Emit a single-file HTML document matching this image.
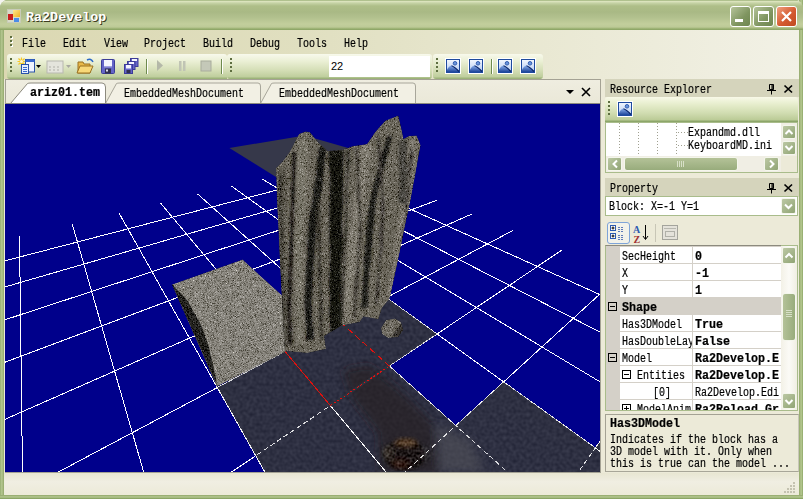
<!DOCTYPE html>
<html><head><meta charset="utf-8">
<style>
*{margin:0;padding:0;box-sizing:border-box}
html,body{width:803px;height:499px;overflow:hidden;background:#F4F4F0}
body{position:relative;font-family:"Liberation Mono",monospace;font-size:12px;color:#000}
.a{position:absolute}
.t{position:absolute;white-space:nowrap;font:12px/12px "Liberation Mono",monospace;transform:scaleX(0.8333);transform-origin:0 0;-webkit-text-stroke:0.2px #000}
.b{font-weight:bold}
.t.b{transform:scaleX(0.9722)}
</style></head><body>
<!-- window frame -->
<div class="a" style="left:0;top:0;width:803px;height:499px;background:linear-gradient(90deg,#8AA266 0,#B4C78F 1px,#A6BA80 3px,#8EA467 4px);border-radius:8px 8px 0 0"></div>
<div class="a" style="right:0;top:0;width:4px;height:499px;background:linear-gradient(90deg,#8EA467 0,#A6BA80 1px,#B4C78F 3px,#7E9A58 4px)"></div>
<div class="a" style="left:0;bottom:0;width:803px;height:4px;background:linear-gradient(180deg,#8EA467 0,#A6BA80 1px,#B4C78F 2px,#7E9A58 4px)"></div>
<!-- title bar -->
<div class="a" style="left:0;top:0;width:803px;height:30px;border-radius:8px 8px 0 0;background:linear-gradient(180deg,#7E9A58 0,#E2E8C4 1px,#C6D3A6 3px,#AEBE88 6px,#A9B985 12px,#B3C28F 18px,#C2CE9C 24px,#BDCA97 27px,#94AC6C 29px,#8AA264 30px)"></div>
<!-- app icon -->
<div class="a" style="left:7px;top:9px;width:14px;height:14px;border:1px solid #C8CCB8;background:#D8DBC8"></div>
<div class="a" style="left:8px;top:14px;width:5px;height:6px;background:#C81E1E"></div>
<div class="a" style="left:13px;top:10px;width:7px;height:7px;background:linear-gradient(135deg,#FFE890,#F0B020)"></div>
<div class="a" style="left:14px;top:18px;width:5px;height:4px;background:#4A8CE8"></div>
<div class="a b" style="left:26px;top:11px;color:#fff;font:bold 13.4px/14px 'Liberation Mono',monospace;white-space:nowrap;text-shadow:1px 1px 0 #3C3C1E">Ra2Develop</div>
<!-- caption buttons -->
<div class="a" style="left:730px;top:6px;width:21px;height:21px;border:1px solid #fff;border-radius:3px;background:linear-gradient(135deg,#B6C49A,#7F9560 60%,#6F8650)"></div>
<div class="a" style="left:735px;top:19px;width:8px;height:3px;background:#fff"></div>
<div class="a" style="left:753px;top:6px;width:21px;height:21px;border:1px solid #fff;border-radius:3px;background:linear-gradient(135deg,#B6C49A,#7F9560 60%,#6F8650)"></div>
<div class="a" style="left:758px;top:11px;width:11px;height:11px;border:1px solid #fff;border-top-width:3px"></div>
<div class="a" style="left:776px;top:6px;width:21px;height:21px;border:1px solid #fff;border-radius:3px;background:linear-gradient(135deg,#F0A080,#D45A30 55%,#C04A20)"></div>
<svg class="a" style="left:776px;top:6px" width="21" height="21"><path d="M6 6L15 15M15 6L6 15" stroke="#fff" stroke-width="2.2"/></svg>

<!-- client area -->
<div class="a" style="left:4px;top:30px;width:795px;height:465px;background:#ECEAD8"></div>
<!-- menu + toolbar container gradient -->
<div class="a" style="left:4px;top:30px;width:795px;height:49px;background:linear-gradient(90deg,#DBD8B2 0,#E0DFC0 300px,#E6E5CC 450px,#F2F1E6 100%)"></div>
<!-- menu grip -->
<svg class="a" style="left:10px;top:36px" width="4" height="12"><g fill="#fff"><rect x="1" y="1" width="2" height="2"/><rect x="1" y="5" width="2" height="2"/><rect x="1" y="9" width="2" height="2"/></g><g fill="#5E6E40"><rect x="0" y="0" width="2" height="2"/><rect x="0" y="4" width="2" height="2"/><rect x="0" y="8" width="2" height="2"/></g></svg>
<div class="t" style="left:22px;top:38px">File</div>
<div class="t" style="left:63px;top:38px">Edit</div>
<div class="t" style="left:104px;top:38px">View</div>
<div class="t" style="left:144px;top:38px">Project</div>
<div class="t" style="left:203px;top:38px">Build</div>
<div class="t" style="left:250px;top:38px">Debug</div>
<div class="t" style="left:297px;top:38px">Tools</div>
<div class="t" style="left:344px;top:38px">Help</div>

<!-- toolbars -->
<div class="a" style="left:7px;top:54px;width:220px;height:25px;border-radius:3px 3px 0 3px;background:linear-gradient(180deg,#F8F9EC 0,#EAEFD4 30%,#D4DEB6 65%,#C0CF9E 90%,#94AC70 100%)"></div>
<div class="a" style="left:227px;top:54px;width:205px;height:25px;border-radius:3px;background:linear-gradient(180deg,#F8F9EC 0,#EAEFD4 30%,#D4DEB6 65%,#C0CF9E 90%,#94AC70 100%)"></div>
<div class="a" style="left:433px;top:54px;width:110px;height:25px;border-radius:3px;background:linear-gradient(180deg,#F8F9EC 0,#EAEFD4 30%,#D4DEB6 65%,#C0CF9E 90%,#94AC70 100%)"></div>
<svg class="a" style="left:10px;top:58px" width="4" height="16"><g fill="#5E6E40"><rect y="0" width="2" height="2"/><rect y="4" width="2" height="2"/><rect y="8" width="2" height="2"/><rect y="12" width="2" height="2"/></g></svg>
<svg class="a" style="left:230px;top:58px" width="4" height="16"><g fill="#5E6E40"><rect y="0" width="2" height="2"/><rect y="4" width="2" height="2"/><rect y="8" width="2" height="2"/><rect y="12" width="2" height="2"/></g></svg>
<svg class="a" style="left:436px;top:58px" width="4" height="16"><g fill="#5E6E40"><rect y="0" width="2" height="2"/><rect y="4" width="2" height="2"/><rect y="8" width="2" height="2"/><rect y="12" width="2" height="2"/></g></svg>
<!-- toolbar icons -->
<svg class="a" style="left:16px;top:57px" width="210" height="20">
 <!-- new project -->
 <path d="M5.5 0.5v8M1.5 4.5h8M2.5 1.5l6 6M8.5 1.5l-6 6" stroke="#F6C828" stroke-width="1.2"/><circle cx="5.5" cy="4.5" r="1.5" fill="#FFF8D0"/>
 <rect x="9.5" y="2.5" width="9" height="12.5" fill="#F0F4FF" stroke="#2A52A8"/><rect x="9.5" y="2.5" width="9" height="2.5" fill="#3A6AD0"/>
 <rect x="5.5" y="7.5" width="7" height="9" fill="#E8F0FF" stroke="#2A52A8"/><path d="M7 10.5h4M7 12.5h4M7 14.5h4" stroke="#3A6AD0"/>
 <path d="M20 8h5l-2.5 3z" fill="#000"/>
 <!-- grayed -->
 <rect x="31" y="4" width="16" height="12" fill="#E4E4DC" stroke="#B8B8B0"/><path d="M33 10h2M37 10h2M41 10h2M33 13h2M37 13h2M41 13h2" stroke="#B0B0A8"/>
 <path d="M50 8h5l-2.5 3z" fill="#A8A8A0"/>
 <!-- open folder -->
 <path d="M62 5h5l1 2h6v9H62z" fill="#E8B848" stroke="#9A7020"/><path d="M64 9h13l-3 7H61z" fill="#F8D878" stroke="#9A7020"/>
 <path d="M71 3q4-2 6 2" stroke="#2A68C8" fill="none" stroke-width="1.5"/>
 <!-- save -->
 <rect x="85.5" y="2.5" width="13" height="14" rx="1" fill="#6464C8" stroke="#3C3C98"/><rect x="88" y="3" width="8" height="6.5" fill="#F4F4FF"/><rect x="88" y="9.5" width="8" height="1" fill="#9898D8"/><rect x="89" y="11.5" width="6" height="5" fill="#303050"/><rect x="90" y="12.5" width="2" height="2" fill="#E0E0F0"/>
 <!-- save all -->
 <rect x="114.5" y="1.5" width="7.5" height="8" fill="#6464C8" stroke="#3C3C98"/><rect x="116" y="2" width="5" height="2" fill="#F4F4FF"/>
 <rect x="111.5" y="4.5" width="7.5" height="8" fill="#6464C8" stroke="#3C3C98"/><rect x="113" y="5" width="5" height="2" fill="#F4F4FF"/>
 <rect x="108.5" y="7.5" width="8" height="9" fill="#6464C8" stroke="#3C3C98"/><rect x="110" y="8" width="5" height="3.5" fill="#F4F4FF"/><rect x="110.5" y="13" width="4" height="3" fill="#303050"/>
 <rect x="130" y="2" width="1" height="15" fill="#6E8A4E"/><rect x="131" y="2" width="1" height="15" fill="#fff"/>
 <path d="M141 3l6 5.5-6 5.5z" fill="#B4B8A8"/>
 <rect x="163" y="4" width="2.5" height="10" fill="#C0C4B4"/><rect x="167" y="4" width="2.5" height="10" fill="#C0C4B4"/>
 <rect x="185" y="4" width="10" height="10" fill="#C4C8B8" stroke="#A8AC9C"/>
 <rect x="205" y="2" width="1" height="15" fill="#6E8A4E"/><rect x="206" y="2" width="1" height="15" fill="#fff"/>
</svg>
<!-- textbox -->
<div class="a" style="left:329px;top:56px;width:101px;height:21px;background:#fff"></div>
<div class="a" style="left:331px;top:59px;font:11px/14px 'Liberation Sans',sans-serif">22</div>
<!-- picture icons -->
<svg class="a" style="left:444px;top:57px" width="95" height="20">
 <defs><linearGradient id="picg" x1="0" y1="0" x2="0" y2="1"><stop offset="0" stop-color="#F4F8FF"/><stop offset="1" stop-color="#B0C8F0"/></linearGradient>
 <linearGradient id="hillg" x1="0" y1="0" x2="0" y2="1"><stop offset="0" stop-color="#8CB0EC"/><stop offset="1" stop-color="#1C449A"/></linearGradient>
 <g id="pic"><rect x="0" y="1" width="16" height="16" fill="#fff"/><rect x="1.5" y="2.5" width="13" height="13" fill="url(#picg)" stroke="#1E4A9E"/><path d="M2 15V12.5Q4.5 8.5 6.5 8.5Q9 9 14 14V15Z" fill="url(#hillg)"/><path d="M6.5 8.8Q9 9.5 14 14.5" stroke="#0A2466" stroke-width="1.1" fill="none"/><circle cx="10" cy="6.3" r="1.8" fill="#6A94DC" stroke="#2A56A8" stroke-width=".9"/></g></defs>
 <use href="#pic" x="1"/><use href="#pic" x="24"/>
 <rect x="47" y="2" width="1" height="15" fill="#6E8A4E"/><rect x="48" y="2" width="1" height="15" fill="#fff"/>
 <use href="#pic" x="53"/><use href="#pic" x="76"/>
</svg>

<!-- document area -->
<div class="a" style="left:5px;top:79px;width:596px;height:25px;background:linear-gradient(180deg,#EFEDE0,#EAE8D8);border:1px solid #A4A294;border-bottom:none"></div>
<svg class="a" style="left:5px;top:79px" width="596" height="25">
 <path d="M255.5 24.5L266.5 4.5Q267.5 4 270 4H408Q410.5 4 410.5 7V24.5" fill="#F2F0E4" stroke="#A8A69A"/>
 <path d="M100.5 24.5L111.5 4.5Q112.5 4 115 4H253Q255.5 4 255.5 7V24.5" fill="#F2F0E4" stroke="#A8A69A"/>
 <path d="M5.5 24.5L22.5 4.5Q23.5 4 26 4H97Q100.5 4 100.5 8V24.5" fill="#fff" stroke="#8C8A7E"/>
 <path d="M561 11h8l-4 4z" fill="#000"/>
 <path d="M577 9l8 8M585 9l-8 8" stroke="#000" stroke-width="1.6"/>
</svg>
<div class="t b" style="left:30px;top:87px">ariz01.tem</div>
<div class="t" style="left:124px;top:88px">EmbeddedMeshDocument</div>
<div class="t" style="left:279px;top:88px">EmbeddedMeshDocument</div>

<!-- viewport -->
<div class="a" style="left:5px;top:103px;width:596px;height:370px;border:1px solid #A4A294;border-top-color:#8C8A7E"></div>
<svg id="vp" class="a" style="left:5px;top:104px" width="595" height="368" viewBox="5 104 595 368">
 <rect x="5" y="104" width="595" height="368" fill="#00008B"/>
 <g id="scene">
<defs><filter id="spk" x="0" y="0" width="100%" height="100%" color-interpolation-filters="sRGB"><feTurbulence type="fractalNoise" baseFrequency="1.5" numOctaves="2" seed="4" result="n"/><feColorMatrix in="n" type="matrix" values="1.1 0 0 0 -0.05  1.1 0 0 0 -0.05  1.1 0 0 0 -0.05  0 0 0 0 1" result="g"/><feComponentTransfer in="g" result="g2"><feFuncR type="discrete" tableValues="0 0.15 0.35 0.5 0.6 0.75 1"/><feFuncG type="discrete" tableValues="0 0.15 0.35 0.5 0.6 0.75 1"/><feFuncB type="discrete" tableValues="0 0.15 0.35 0.5 0.6 0.75 1"/></feComponentTransfer><feColorMatrix in="g2" type="matrix" values="1 0 0 0 0  0.97 0.03 0 0 0  0.85 0 0.2 0 -0.02  0 0 0 0 1" result="g3"/><feComposite in="SourceGraphic" in2="g3" operator="arithmetic" k1="0" k2="1" k3="0.7" k4="-0.35" result="c"/><feComposite in="c" in2="SourceAlpha" operator="in"/></filter><filter id="spk2" x="0" y="0" width="100%" height="100%" color-interpolation-filters="sRGB"><feTurbulence type="fractalNoise" baseFrequency="1.6" numOctaves="2" seed="9" result="n"/><feColorMatrix in="n" type="matrix" values="1.1 0 0 0 -0.05  1.1 0 0 0 -0.05  1.1 0 0 0 -0.05  0 0 0 0 1" result="g"/><feComponentTransfer in="g" result="g2"><feFuncR type="discrete" tableValues="0 0.15 0.35 0.5 0.6 0.75 1"/><feFuncG type="discrete" tableValues="0 0.15 0.35 0.5 0.6 0.75 1"/><feFuncB type="discrete" tableValues="0 0.15 0.35 0.5 0.6 0.75 1"/></feComponentTransfer><feColorMatrix in="g2" type="matrix" values="1 0 0 0 0  0.97 0.03 0 0 0  0.85 0 0.2 0 -0.02  0 0 0 0 1" result="g3"/><feComposite in="SourceGraphic" in2="g3" operator="arithmetic" k1="0" k2="1" k3="0.7" k4="-0.35" result="c"/><feComposite in="c" in2="SourceAlpha" operator="in"/></filter><filter id="spk3" x="0" y="0" width="100%" height="100%" color-interpolation-filters="sRGB"><feTurbulence type="fractalNoise" baseFrequency="0.4" numOctaves="1" seed="11" result="n"/><feColorMatrix in="n" type="matrix" values="1 0 0 0 0 1 0 0 0 0 1 0 0 0 0 0 0 0 0 1" result="g"/><feComposite in="SourceGraphic" in2="g" operator="arithmetic" k1="0" k2="1" k3="0.5" k4="-0.25" result="c"/><feComposite in="c" in2="SourceAlpha" operator="in"/></filter><filter id="tex2" x="0" y="0" width="100%" height="100%" color-interpolation-filters="sRGB"><feTurbulence type="fractalNoise" baseFrequency="0.3" numOctaves="1" seed="7" result="n"/><feColorMatrix in="n" type="matrix" values="1 0 0 0 0 1 0 0 0 0 1 0 0 0 0 0 0 0 0 1" result="g"/><feComposite in="SourceGraphic" in2="g" operator="arithmetic" k1="0" k2="1" k3="0.14" k4="-0.07" result="c"/><feComposite in="c" in2="SourceAlpha" operator="in"/></filter><filter id="blur2"><feGaussianBlur stdDeviation="1.8"/></filter><filter id="blur15" x="-30%" y="-30%" width="160%" height="160%"><feGaussianBlur stdDeviation="2.5"/></filter><filter id="blur1"><feGaussianBlur stdDeviation="1.1"/></filter><filter id="blur3" x="-20%" y="-20%" width="140%" height="140%"><feGaussianBlur stdDeviation="5"/></filter></defs>
<defs><clipPath id="tileclip"><path d="M217.3,387.5 L340.4,322.1 L7603.9,6840.3 L3853.1,6842.9Z M340.4,322.1 L386.4,297.6 L437.0,334.0 L389.4,366.0Z M455.8,425.6 L503.6,381.9 L9479.2,6839.0 L7603.9,6840.3Z M595.3,447.9 L735.6,248.1 L22606.9,6829.8 L9479.2,6839.0Z"/></clipPath></defs>
<path d="M-530.1,366.0L-11150.0,6853.3 M-394.8,334.0L-9274.6,6852.0 M-283.1,307.6L-7399.2,6850.7 M-189.3,285.5L-5523.8,6849.4 M-109.4,266.6L-3648.5,6848.1 M-40.5,250.4L-1773.1,6846.8 M19.5,236.2L102.3,6845.5 M72.2,223.8L1977.7,6844.2 M118.8,212.7L3853.1,6842.9 M160.4,202.9L5728.5,6841.6 M197.8,194.1L7603.9,6840.3 M231.5,186.1L9479.2,6839.0 M262.0,178.9L11354.6,6837.7 M289.9,172.4L13230.0,6836.3 M315.3,166.3L15105.4,6835.0 M-25372.8,6863.2L358.7,168.8 M-22688.3,6861.4L381.3,177.9 M-20003.8,6859.5L407.2,188.3 M-17319.3,6857.6L437.0,200.2 M-14634.8,6855.8L471.7,214.1 M-11950.3,6853.9L512.6,230.6 M-9265.8,6852.0L561.7,250.2 M-6581.3,6850.1L621.6,274.2 M-3896.8,6848.3L696.2,304.2 M-1212.2,6846.4L791.9,342.5 M1472.3,6844.5L918.9,393.5 M4156.8,6842.7L1095.7,464.4 M6841.3,6840.8L1358.7,569.8 M9525.8,6838.9L1791.4,743.3 M12210.3,6837.1L2635.8,1081.9 M14894.8,6835.2L5013.4,2035.2" stroke="#fff" stroke-width="1" fill="none" shape-rendering="crispEdges"/>
<path d="M217.3,387.5 L340.4,322.1 L7603.9,6840.3 L3853.1,6842.9Z M340.4,322.1 L386.4,297.6 L437.0,334.0 L389.4,366.0Z M455.8,425.6 L503.6,381.9 L9479.2,6839.0 L7603.9,6840.3Z M595.3,447.9 L735.6,248.1 L22606.9,6829.8 L9479.2,6839.0Z" fill="#2E3042" filter="url(#tex2)"/>
<g clip-path="url(#tileclip)"><g filter="url(#blur3)"><path d="M342.5,370 L370,365 L402.7,392.6 L432.8,422.7 L437.8,455 L440,475 L380,475 L377.6,432.7 L352.6,400Z" fill="#24201E" opacity=".6"/><path d="M436,424 L470,440 L485,472 L440,472Z" fill="#55555C" opacity=".55"/></g><g filter="url(#spk3)"><g filter="url(#blur15)"><ellipse cx="405" cy="455" rx="22" ry="16" fill="#1E1612"/><ellipse cx="406" cy="441" rx="12" ry="4.5" fill="#7A5A3A" opacity=".7"/><ellipse cx="386" cy="452" rx="6" ry="8" fill="#55504A" opacity=".6"/><ellipse cx="428" cy="452" rx="6" ry="9" fill="#505058" opacity=".5"/><ellipse cx="400" cy="465" rx="10" ry="6" fill="#3A2418" opacity=".7"/></g></g></g>
<g clip-path="url(#tileclip)"><path d="M-530.1,366.0L-11150.0,6853.3 M-394.8,334.0L-9274.6,6852.0 M-283.1,307.6L-7399.2,6850.7 M-189.3,285.5L-5523.8,6849.4 M-109.4,266.6L-3648.5,6848.1 M-40.5,250.4L-1773.1,6846.8 M19.5,236.2L102.3,6845.5 M72.2,223.8L1977.7,6844.2 M118.8,212.7L3853.1,6842.9 M160.4,202.9L5728.5,6841.6 M197.8,194.1L7603.9,6840.3 M231.5,186.1L9479.2,6839.0 M262.0,178.9L11354.6,6837.7 M289.9,172.4L13230.0,6836.3 M315.3,166.3L15105.4,6835.0 M-25372.8,6863.2L358.7,168.8 M-22688.3,6861.4L381.3,177.9 M-20003.8,6859.5L407.2,188.3 M-17319.3,6857.6L437.0,200.2 M-14634.8,6855.8L471.7,214.1 M-11950.3,6853.9L512.6,230.6 M-9265.8,6852.0L561.7,250.2 M-6581.3,6850.1L621.6,274.2 M-3896.8,6848.3L696.2,304.2 M-1212.2,6846.4L791.9,342.5 M1472.3,6844.5L918.9,393.5 M4156.8,6842.7L1095.7,464.4 M6841.3,6840.8L1358.7,569.8 M9525.8,6838.9L1791.4,743.3 M12210.3,6837.1L2635.8,1081.9 M14894.8,6835.2L5013.4,2035.2" stroke="#fff" stroke-width="1" fill="none" stroke-dasharray="5 3" opacity=".85" shape-rendering="crispEdges"/>
<path d="M217.3,387.5L744.2,1323.0 M330.4,405.6L785.8,948.5 M595.3,447.9L735.6,248.1 M595.3,447.9L823.2,611.9" stroke="#fff" fill="none" opacity=".9" shape-rendering="crispEdges"/></g>
<path d="M285.1,351.5L330.4,405.6M330.4,405.6L389.4,366.0M340.4,322.1L389.4,366.0" stroke="#30323C" stroke-width="2.5"/>
<path d="M285.1,351.5L330.4,405.6" stroke="#E01010" stroke-width="1" shape-rendering="crispEdges"/>
<path d="M330.4,405.6L389.4,366.0" stroke="#E01010" stroke-width="1" shape-rendering="crispEdges" stroke-dasharray="2 2"/>
<path d="M340.4,322.1L389.4,366.0" stroke="#E01010" stroke-width="1" shape-rendering="crispEdges" stroke-dasharray="6 4"/>
<path d="M229.4,148 L304.6,135.4 L362,152 L300,192Z" fill="#36384A"/>
<g filter="url(#spk2)"><path d="M172,284.5 L242.6,259.6 L281.7,295 L288,300 L288,350 L284.7,352 L217,386.7Z" fill="#86837A"/><path d="M172,284.5 L186.8,299.4 L201.3,325.6 L208.6,346 L215.9,378 L217.3,386.6Z" fill="#24231E"/></g>
<defs><clipPath id="rockclip"><path d="M276.0,168.0 L282.8,161.3 L289.9,151.5 L299.0,134.0 L305.4,131.6 L310.0,132.3 L318.6,142.7 L327.5,151.0 L336.3,150.5 L343.4,149.5 L353.2,146.0 L366.9,144.3 L375.2,132.0 L385.2,120.8 L398.3,115.6 L401.7,129.8 L403.5,139.0 L409.0,136.0 L416.6,135.5 L420.6,145.2 L416.0,170.0 L410.0,202.0 L404.8,226.0 L400.0,250.0 L394.0,278.0 L389.6,298.7 L382.0,308.0 L378.4,319.2 L363.4,316.4 L359.7,322.0 L341.0,325.8 L324.2,336.0 L326.0,349.1 L307.4,352.9 L285.0,351.0 L283.0,318.0 L280.0,260.0 L277.0,200.0Z"/></clipPath></defs>
<g filter="url(#spk)"><path d="M276.0,168.0 L282.8,161.3 L289.9,151.5 L299.0,134.0 L305.4,131.6 L310.0,132.3 L318.6,142.7 L327.5,151.0 L336.3,150.5 L343.4,149.5 L353.2,146.0 L366.9,144.3 L375.2,132.0 L385.2,120.8 L398.3,115.6 L401.7,129.8 L403.5,139.0 L409.0,136.0 L416.6,135.5 L420.6,145.2 L416.0,170.0 L410.0,202.0 L404.8,226.0 L400.0,250.0 L394.0,278.0 L389.6,298.7 L382.0,308.0 L378.4,319.2 L363.4,316.4 L359.7,322.0 L341.0,325.8 L324.2,336.0 L326.0,349.1 L307.4,352.9 L285.0,351.0 L283.0,318.0 L280.0,260.0 L277.0,200.0Z" fill="#6A665A"/><g clip-path="url(#rockclip)"><g filter="url(#blur1)"><path d="M278.3,168.0 L278.7,181.0 L278.6,194.0 L276.9,207.0 L279.1,220.0 L279.0,233.0 L277.9,246.0 L278.1,259.0 L277.1,272.0 L278.0,285.0 L279.5,298.0 L279.8,311.0 L279.7,324.0 L278.5,337.0 L279.3,350.0 L287.3,350.0 L288.6,337.0 L286.5,324.0 L286.3,311.0 L286.0,298.0 L287.6,285.0 L285.6,272.0 L286.2,259.0 L285.4,246.0 L285.1,233.0 L286.4,220.0 L285.9,207.0 L287.0,194.0 L287.1,181.0 L286.6,168.0Z" fill="#5A564C"/><path d="M299.2,140.0 L297.1,154.6 L297.4,169.3 L296.2,183.9 L297.0,198.6 L297.1,213.2 L295.5,227.8 L294.6,242.5 L295.1,257.1 L294.5,271.8 L295.3,286.4 L296.6,301.1 L295.4,315.7 L296.4,330.4 L297.1,345.0 L302.9,345.0 L303.0,330.4 L304.1,315.7 L304.2,301.1 L303.8,286.4 L304.8,271.8 L304.7,257.1 L303.5,242.5 L304.1,227.8 L305.0,213.2 L307.1,198.6 L307.5,183.9 L307.4,169.3 L308.6,154.6 L308.9,140.0Z" fill="#787468"/><path d="M362.6,144.0 L359.1,156.5 L358.2,169.1 L355.7,181.6 L354.4,194.2 L352.7,206.7 L352.7,219.2 L349.6,231.8 L348.3,244.3 L345.6,256.9 L346.4,269.5 L343.6,282.1 L342.8,294.7 L343.2,307.4 L341.6,320.0 L351.0,320.0 L352.1,307.4 L351.7,294.7 L354.2,282.1 L355.1,269.5 L355.9,256.9 L357.8,244.3 L358.6,231.8 L361.9,219.2 L363.3,206.7 L365.6,194.2 L365.3,181.6 L368.5,169.1 L370.8,156.5 L372.8,144.0Z" fill="#807C70"/><path d="M405.1,140.0 L403.7,151.1 L402.3,162.3 L403.0,173.4 L400.9,184.5 L402.0,195.7 L399.8,206.8 L399.4,217.9 L397.5,228.9 L394.8,240.0 L392.9,251.0 L393.1,262.0 L391.1,273.0 L389.1,284.0 L386.1,295.0 L396.8,295.0 L399.7,284.0 L402.2,273.0 L402.3,262.0 L405.2,251.0 L408.3,240.0 L409.1,228.9 L412.0,217.9 L411.7,206.8 L413.5,195.7 L413.4,184.5 L416.8,173.4 L415.9,162.3 L417.1,151.1 L418.5,140.0Z" fill="#7A766A"/><path d="M328.3,150.0 L328.7,163.4 L330.2,176.9 L330.3,190.3 L329.4,203.7 L329.5,217.1 L329.5,230.6 L329.5,244.0 L330.6,257.4 L329.6,270.9 L328.8,284.3 L330.2,297.7 L329.3,311.1 L330.1,324.6 L329.8,338.0 L341.0,338.0 L341.1,324.6 L341.6,311.1 L342.0,297.7 L341.0,284.3 L341.4,270.9 L342.2,257.4 L343.2,244.0 L341.7,230.6 L342.0,217.1 L343.0,203.7 L342.6,190.3 L343.5,176.9 L342.8,163.4 L343.7,150.0Z" fill="#14120F"/><path d="M319.2,147.0 L317.2,160.7 L316.4,174.5 L313.6,188.2 L312.5,202.0 L309.4,215.7 L308.1,229.4 L307.6,243.3 L307.1,257.1 L305.6,270.9 L305.5,284.8 L303.8,298.6 L304.7,312.4 L306.2,326.2 L306.5,340.0 L313.6,340.0 L313.1,326.2 L311.3,312.4 L311.8,298.6 L312.6,284.8 L313.2,270.9 L314.4,257.1 L315.3,243.3 L315.9,229.4 L317.5,215.7 L319.4,202.0 L321.9,188.2 L323.2,174.5 L324.7,160.7 L326.9,147.0Z" fill="#1C1A16"/><path d="M291.5,152.0 L292.1,171.3 L291.1,190.6 L290.5,209.9 L290.0,229.2 L289.2,248.5 L288.5,267.8 L287.9,287.1 L286.3,306.4 L287.4,325.7 L287.6,345.0 L292.3,345.0 L291.7,325.7 L290.5,306.4 L292.0,287.1 L292.7,267.8 L292.8,248.5 L293.7,229.2 L293.6,209.9 L295.1,190.6 L295.3,171.3 L296.5,152.0Z" fill="#26231E"/><path d="M387.2,136.0 L383.8,148.1 L379.9,160.1 L377.1,172.2 L373.7,184.2 L371.0,196.3 L368.8,208.5 L367.3,220.9 L365.9,233.4 L365.4,245.8 L364.2,258.2 L363.7,270.7 L363.1,283.1 L362.0,295.6 L361.1,308.0 L367.7,308.0 L367.7,295.6 L368.3,283.1 L369.1,270.7 L371.4,258.2 L371.6,245.8 L372.6,233.4 L374.3,220.9 L374.8,208.5 L376.8,196.3 L379.5,184.2 L382.9,172.2 L386.0,160.1 L389.4,148.1 L392.3,136.0Z" fill="#22201B"/><path d="M399.1,140.0 L399.2,148.0 L398.4,156.0 L398.9,164.0 L399.7,172.0 L399.0,180.0 L399.7,188.0 L398.2,196.0 L399.2,204.0 L406.3,204.0 L407.2,196.0 L406.1,188.0 L406.9,180.0 L408.2,172.0 L407.4,164.0 L406.7,156.0 L407.7,148.0 L407.3,140.0Z" fill="#4A4740"/><path d="M278.8,175.0 L278.5,189.2 L278.5,203.3 L280.2,217.5 L280.4,231.7 L279.9,245.8 L281.0,260.0 L280.1,274.2 L281.5,288.3 L280.3,302.5 L280.2,316.7 L281.1,330.8 L282.1,345.0 L285.2,345.0 L283.8,330.8 L284.2,316.7 L283.7,302.5 L283.5,288.3 L282.9,274.2 L283.0,260.0 L282.3,245.8 L283.3,231.7 L282.0,217.5 L281.6,203.3 L281.6,189.2 L282.3,175.0Z" fill="#3A372F"/><path d="M345.5,150.0 L345.6,164.2 L346.2,178.3 L344.8,192.5 L345.8,206.7 L344.6,220.8 L344.2,235.0 L344.0,249.2 L343.4,263.3 L342.4,277.5 L341.3,291.7 L341.0,305.8 L341.0,320.0 L343.7,320.0 L343.8,305.8 L344.8,291.7 L345.0,277.5 L345.5,263.3 L345.8,249.2 L347.2,235.0 L347.3,220.8 L347.4,206.7 L347.5,192.5 L348.1,178.3 L349.9,164.2 L349.6,150.0Z" fill="#3E3B33"/><path d="M354.8,148.0 L356.2,162.2 L357.6,176.4 L356.3,190.5 L357.7,204.7 L358.8,218.9 L358.5,233.1 L357.3,247.2 L357.3,261.4 L355.2,275.5 L353.8,289.7 L354.1,303.8 L352.3,318.0 L355.8,318.0 L356.1,303.8 L357.9,289.7 L358.8,275.5 L358.5,261.4 L359.9,247.2 L361.9,233.1 L361.1,218.9 L360.5,204.7 L360.4,190.5 L359.4,176.4 L359.6,162.2 L357.8,148.0Z" fill="#46433B"/><path d="M377.3,135.0 L377.5,149.2 L378.7,163.3 L379.1,177.5 L381.5,191.6 L380.7,205.8 L381.1,220.0 L378.8,234.2 L380.0,248.4 L378.7,262.6 L377.7,276.7 L376.0,290.9 L374.9,305.0 L376.8,305.0 L379.7,290.9 L379.5,276.7 L380.4,262.6 L383.1,248.4 L383.2,234.2 L383.8,220.0 L384.8,205.8 L383.0,191.6 L382.9,177.5 L381.3,163.3 L380.7,149.2 L378.8,135.0Z" fill="#44413A"/><path d="M410.1,150.0 L408.9,160.9 L408.5,171.7 L407.9,182.6 L406.0,193.5 L405.0,204.4 L405.1,215.2 L404.3,226.1 L401.8,236.8 L400.6,247.6 L399.6,258.4 L396.2,269.2 L394.8,280.0 L398.8,280.0 L400.5,269.2 L401.5,258.4 L403.3,247.6 L404.6,236.8 L405.9,226.1 L408.4,215.2 L408.0,204.4 L409.5,193.5 L409.8,182.6 L411.0,171.7 L412.8,160.9 L414.3,150.0Z" fill="#46433C"/><path d="M316.5,200.0 L317.0,214.0 L316.8,228.0 L317.2,242.0 L318.1,256.0 L318.0,270.0 L319.4,284.0 L319.7,298.0 L318.9,312.0 L319.3,326.0 L320.7,340.0 L323.0,340.0 L322.3,326.0 L323.0,312.0 L322.6,298.0 L321.3,284.0 L321.2,270.0 L320.4,256.0 L321.2,242.0 L320.4,228.0 L320.1,214.0 L320.3,200.0Z" fill="#3A372F"/></g></g></g>
<g filter="url(#spk)"><path d="M381,328 L386,320 L395,318.5 L401,322 L403,330 L398,337 L388,338 L382,334Z" fill="#6E6A60"/><path d="M392,336 L401,324 L403,330 L398,337Z" fill="#3A3630"/></g>
</g>
</svg>

<!-- right panel: resource explorer -->
<div class="a" style="left:605px;top:79px;width:194px;height:18px;background:#D5D4BC"></div>
<div class="t" style="left:610px;top:84px">Resource Explorer</div>
<svg class="a" style="left:764px;top:82px" width="34" height="14">
 <path d="M5.5 2.5h4v5h-4zM8 2.5v5M9 2.5v5M3 8.5h9M7.5 8.5v4" stroke="#000" fill="none"/>
 <path d="M20.5 3.5l7.5 7M28 3.5l-7.5 7" stroke="#000" stroke-width="1.7"/>
</svg>
<div class="a" style="left:605px;top:97px;width:193px;height:25px;border-radius:3px 3px 0 0;background:linear-gradient(180deg,#F8F9E8 0,#E6EDCC 30%,#D0DCB0 65%,#BCCC98 90%,#809C5E 100%)"></div>
<svg class="a" style="left:608px;top:101px" width="4" height="16"><g fill="#5E6E40"><rect y="0" width="2" height="2"/><rect y="4" width="2" height="2"/><rect y="8" width="2" height="2"/><rect y="12" width="2" height="2"/></g></svg>
<svg class="a" style="left:616px;top:100px" width="18" height="18"><use href="#pic" x="1" y="0"/></svg>
<div class="a" style="left:605px;top:122px;width:193px;height:51px;background:#fff;border:1px solid #A9BC8B"></div>
<svg class="a" style="left:606px;top:123px" width="176" height="33">
 <path d="M13.5 0v33M32.5 0v33M51.5 0v33M70.5 0v33M72 9.5h10M72 22.5h10" stroke="#A0A090" stroke-dasharray="1 2"/>
</svg>
<div class="t" style="left:688px;top:127px">Expandmd.dll</div>
<div class="t" style="left:688px;top:140px">KeyboardMD.ini</div>
<!-- v scrollbar -->
<div class="a" style="left:781px;top:123px;width:16px;height:33px;background:#F0EEE4"></div>
<div class="a" style="left:782px;top:125px;width:14px;height:14px;border:1px solid #F4F6EC;border-radius:2px;background:linear-gradient(135deg,#BCC8A4,#90A474)"></div>
<div class="a" style="left:782px;top:141px;width:14px;height:14px;border:1px solid #F4F6EC;border-radius:2px;background:linear-gradient(135deg,#BCC8A4,#90A474)"></div>
<svg class="a" style="left:782px;top:125px" width="14" height="30"><path d="M3.5 9l3.5-3.5 3.5 3.5M3.5 21l3.5 3.5 3.5-3.5" stroke="#fff" stroke-width="2" fill="none"/></svg>
<!-- h scrollbar -->
<div class="a" style="left:606px;top:156px;width:175px;height:16px;background:#F0EEE4"></div>
<div class="a" style="left:607px;top:157px;width:15px;height:14px;border:1px solid #F4F6EC;border-radius:2px;background:linear-gradient(135deg,#BCC8A4,#90A474)"></div>
<div class="a" style="left:764px;top:157px;width:15px;height:14px;border:1px solid #F4F6EC;border-radius:2px;background:linear-gradient(135deg,#BCC8A4,#90A474)"></div>
<div class="a" style="left:624px;top:157px;width:114px;height:14px;border:1px solid #F4F6EC;border-radius:3px;background:linear-gradient(180deg,#B4C298,#98AC7C)"></div>
<svg class="a" style="left:607px;top:157px" width="174" height="14"><path d="M10 3.5L6.5 7 10 10.5M163 3.5L166.5 7 163 10.5" stroke="#fff" stroke-width="2" fill="none"/><path d="M70.5 4v6M72.5 4v6M74.5 4v6M76.5 4v6" stroke="#D8E0C8"/></svg>
<div class="a" style="left:781px;top:156px;width:16px;height:16px;background:#ECEAD8"></div>

<!-- property -->
<div class="a" style="left:605px;top:178px;width:194px;height:19px;background:#D5D4BC"></div>
<div class="t" style="left:610px;top:183px">Property</div>
<svg class="a" style="left:764px;top:181px" width="34" height="14">
 <path d="M5.5 2.5h4v5h-4zM8 2.5v5M9 2.5v5M3 8.5h9M7.5 8.5v4" stroke="#000" fill="none"/>
 <path d="M20.5 3.5l7.5 7M28 3.5l-7.5 7" stroke="#000" stroke-width="1.7"/>
</svg>
<div class="a" style="left:605px;top:196px;width:193px;height:20px;background:#fff;border:1px solid #A9BC8B"></div>
<div class="t" style="left:609px;top:201px">Block: X=-1 Y=1</div>
<div class="a" style="left:781px;top:198px;width:15px;height:16px;border:1px solid #F4F6EC;border-radius:2px;background:linear-gradient(135deg,#BCC8A4,#90A474)"></div>
<svg class="a" style="left:781px;top:198px" width="15" height="16"><path d="M4 6.5l3.5 3.5 3.5-3.5" stroke="#fff" stroke-width="2" fill="none"/></svg>
<!-- property toolbar -->
<div class="a" style="left:607px;top:222px;width:23px;height:22px;border:1px solid #7EA4D8;border-radius:3px;background:#F2F2EA"></div>
<svg class="a" style="left:609px;top:224px" width="72" height="20">
 <rect x="1.5" y="1.5" width="5" height="5" fill="#fff" stroke="#2C5AB0"/><path d="M2.5 4h3M4 2.5v3" stroke="#000"/>
 <rect x="1.5" y="9.5" width="5" height="5" fill="#fff" stroke="#2C5AB0"/><path d="M2.5 12h3M4 10.5v3" stroke="#000"/>
 <path d="M9 3.5h6M9 5.5h6M9 7.5h6M9 11.5h6M9 13.5h6M9 15.5h6" stroke="#5E7AB8" stroke-dasharray="2 1"/>
 <text x="24" y="9" font-family="Liberation Serif" font-weight="bold" font-size="10" fill="#2C5AB0">A</text>
 <text x="24.5" y="19" font-family="Liberation Serif" font-weight="bold" font-size="10" fill="#A03030">Z</text>
 <path d="M36.5 1v14M34 12l2.5 3.5 2.5-3.5" stroke="#000" fill="none"/>
 <rect x="46" y="0" width="1" height="18" fill="#C8C6B6"/>
 <rect x="53.5" y="1.5" width="15" height="14" fill="#E4E2DA" stroke="#A4A49C"/><path d="M55 4.5h12" stroke="#B8B8B0"/><rect x="56.5" y="7.5" width="9" height="5" fill="none" stroke="#B0B0A8"/>
</svg>
<!-- grid -->
<div class="a" style="left:605px;top:245px;width:177px;height:166px;background:#fff;border:1px solid #A9BC8B;border-top-color:#8C8A7E;border-right:none"></div>
<div id="pg" class="a" style="left:606px;top:246px;width:175px;height:164px;overflow:hidden;background:#D4D0C8">
<div class="a" style="left:14px;top:1px;width:161px;height:16px;background:#fff"></div>
<div class="a" style="left:14px;top:17px;width:161px;height:1px;background:#D4D0C8"></div>
<div class="a" style="left:86px;top:1px;width:1px;height:16px;background:#D4D0C8"></div>
<div class="a" style="left:16px;top:1px;width:70px;height:16px;overflow:hidden"><div class="t" style="left:0;top:4px">SecHeight</div></div>
<div class="a" style="left:89px;top:1px;width:86px;height:16px;overflow:hidden"><div class="t b" style="left:0;top:4px">0</div></div>
<div class="a" style="left:14px;top:18px;width:161px;height:16px;background:#fff"></div>
<div class="a" style="left:14px;top:34px;width:161px;height:1px;background:#D4D0C8"></div>
<div class="a" style="left:86px;top:18px;width:1px;height:16px;background:#D4D0C8"></div>
<div class="a" style="left:16px;top:18px;width:70px;height:16px;overflow:hidden"><div class="t" style="left:0;top:4px">X</div></div>
<div class="a" style="left:89px;top:18px;width:86px;height:16px;overflow:hidden"><div class="t b" style="left:0;top:4px">-1</div></div>
<div class="a" style="left:14px;top:35px;width:161px;height:16px;background:#fff"></div>
<div class="a" style="left:14px;top:51px;width:161px;height:1px;background:#D4D0C8"></div>
<div class="a" style="left:86px;top:35px;width:1px;height:16px;background:#D4D0C8"></div>
<div class="a" style="left:16px;top:35px;width:70px;height:16px;overflow:hidden"><div class="t" style="left:0;top:4px">Y</div></div>
<div class="a" style="left:89px;top:35px;width:86px;height:16px;overflow:hidden"><div class="t b" style="left:0;top:4px">1</div></div>
<div class="a" style="left:0;top:52px;width:175px;height:17px;background:#D4D0C8"></div>
<svg class="a" style="left:2px;top:56px" width="9" height="9"><rect x=".5" y=".5" width="8" height="8" fill="none" stroke="#000"/><path d="M2 4.5h5" stroke="#000"/></svg>
<div class="t b" style="left:16px;top:56px">Shape</div>
<div class="a" style="left:14px;top:69px;width:161px;height:16px;background:#fff"></div>
<div class="a" style="left:14px;top:85px;width:161px;height:1px;background:#D4D0C8"></div>
<div class="a" style="left:86px;top:69px;width:1px;height:16px;background:#D4D0C8"></div>
<div class="a" style="left:16px;top:69px;width:70px;height:16px;overflow:hidden"><div class="t" style="left:0;top:4px">Has3DModel</div></div>
<div class="a" style="left:89px;top:69px;width:86px;height:16px;overflow:hidden"><div class="t b" style="left:0;top:4px">True</div></div>
<div class="a" style="left:14px;top:86px;width:161px;height:16px;background:#fff"></div>
<div class="a" style="left:14px;top:102px;width:161px;height:1px;background:#D4D0C8"></div>
<div class="a" style="left:86px;top:86px;width:1px;height:16px;background:#D4D0C8"></div>
<div class="a" style="left:16px;top:86px;width:70px;height:16px;overflow:hidden"><div class="t" style="left:0;top:4px">HasDoubleLay</div></div>
<div class="a" style="left:89px;top:86px;width:86px;height:16px;overflow:hidden"><div class="t b" style="left:0;top:4px">False</div></div>
<div class="a" style="left:14px;top:103px;width:161px;height:16px;background:#fff"></div>
<div class="a" style="left:14px;top:119px;width:161px;height:1px;background:#D4D0C8"></div>
<div class="a" style="left:86px;top:103px;width:1px;height:16px;background:#D4D0C8"></div>
<svg class="a" style="left:2px;top:107px" width="9" height="9"><rect x=".5" y=".5" width="8" height="8" fill="none" stroke="#000"/><path d="M2 4.5h5" stroke="#000"/></svg>
<div class="a" style="left:16px;top:103px;width:70px;height:16px;overflow:hidden"><div class="t" style="left:0;top:4px">Model</div></div>
<div class="a" style="left:89px;top:103px;width:86px;height:16px;overflow:hidden"><div class="t b" style="left:0;top:4px">Ra2Develop.E</div></div>
<div class="a" style="left:14px;top:120px;width:161px;height:16px;background:#fff"></div>
<div class="a" style="left:14px;top:136px;width:161px;height:1px;background:#D4D0C8"></div>
<div class="a" style="left:86px;top:120px;width:1px;height:16px;background:#D4D0C8"></div>
<svg class="a" style="left:16px;top:124px" width="9" height="9"><rect x=".5" y=".5" width="8" height="8" fill="none" stroke="#000"/><path d="M2 4.5h5" stroke="#000"/></svg>
<div class="a" style="left:31px;top:120px;width:55px;height:16px;overflow:hidden"><div class="t" style="left:0;top:4px">Entities</div></div>
<div class="a" style="left:89px;top:120px;width:86px;height:16px;overflow:hidden"><div class="t b" style="left:0;top:4px">Ra2Develop.E</div></div>
<div class="a" style="left:14px;top:137px;width:161px;height:16px;background:#fff"></div>
<div class="a" style="left:14px;top:153px;width:161px;height:1px;background:#D4D0C8"></div>
<div class="a" style="left:86px;top:137px;width:1px;height:16px;background:#D4D0C8"></div>
<div class="a" style="left:47px;top:137px;width:39px;height:16px;overflow:hidden"><div class="t" style="left:0;top:4px">[0]</div></div>
<div class="a" style="left:89px;top:137px;width:86px;height:16px;overflow:hidden"><div class="t" style="left:0;top:4px">Ra2Develop.Edi</div></div>
<div class="a" style="left:14px;top:154px;width:161px;height:16px;background:#fff"></div>
<div class="a" style="left:14px;top:170px;width:161px;height:1px;background:#D4D0C8"></div>
<div class="a" style="left:86px;top:154px;width:1px;height:16px;background:#D4D0C8"></div>
<svg class="a" style="left:16px;top:158px" width="9" height="9"><rect x=".5" y=".5" width="8" height="8" fill="none" stroke="#000"/><path d="M2 4.5h5M4.5 2v5" stroke="#000"/></svg>
<div class="a" style="left:31px;top:154px;width:55px;height:16px;overflow:hidden"><div class="t" style="left:0;top:4px">ModelAnim</div></div>
<div class="a" style="left:89px;top:154px;width:86px;height:16px;overflow:hidden"><div class="t b" style="left:0;top:4px">Ra2Reload.Gr</div></div>
</div>
<!-- property v scroll -->
<div class="a" style="left:781px;top:245px;width:17px;height:166px;background:linear-gradient(90deg,#F3F1E7,#FBFAF6 50%,#F0EEE2);border:1px solid #A9BC8B;border-left:none"></div>
<div class="a" style="left:782px;top:247px;width:14px;height:17px;border:1px solid #F4F6EC;border-radius:2px;background:linear-gradient(135deg,#BCC8A4,#90A474)"></div>
<div class="a" style="left:782px;top:293px;width:14px;height:48px;border:1px solid #F4F6EC;border-radius:3px;background:linear-gradient(90deg,#B4C298,#98AC7C)"></div>
<div class="a" style="left:782px;top:393px;width:14px;height:16px;border:1px solid #F4F6EC;border-radius:2px;background:linear-gradient(135deg,#BCC8A4,#90A474)"></div>
<svg class="a" style="left:782px;top:247px" width="14" height="162"><path d="M3.5 10.5l3.5-3.5 3.5 3.5M3.5 153l3.5 3.5 3.5-3.5" stroke="#fff" stroke-width="2" fill="none"/><path d="M4 63.5h6M4 65.5h6M4 67.5h6M4 69.5h6" stroke="#D8E0C8"/></svg>

<!-- help panel -->
<div class="a" style="left:605px;top:414px;width:194px;height:58px;background:#ECEAD8;border:1px solid #A4A294;border-right-color:#C8C6B8;border-bottom-color:#A8A698"></div>
<div class="t b" style="left:610px;top:418px">Has3DModel</div>
<div class="t" style="left:610px;top:434px">Indicates if the block has a</div>
<div class="t" style="left:610px;top:446px">3D model with it. Only when</div>
<div class="t" style="left:610px;top:458px">this is true can the model ...</div>

<!-- status bar -->
<div class="a" style="left:4px;top:473px;width:795px;height:22px;background:linear-gradient(180deg,#E8E6D2 0,#F0EEE2 40%,#ECEAD8 100%)"></div>
<svg class="a" style="left:784px;top:481px" width="14" height="13"><g fill="#C4C2B0"><rect x="9" y="1" width="2" height="2"/><rect x="6" y="4" width="2" height="2"/><rect x="9" y="4" width="2" height="2"/><rect x="3" y="7" width="2" height="2"/><rect x="6" y="7" width="2" height="2"/><rect x="9" y="7" width="2" height="2"/><rect x="0" y="10" width="2" height="2"/><rect x="3" y="10" width="2" height="2"/><rect x="6" y="10" width="2" height="2"/><rect x="9" y="10" width="2" height="2"/></g></svg>
</body></html>
